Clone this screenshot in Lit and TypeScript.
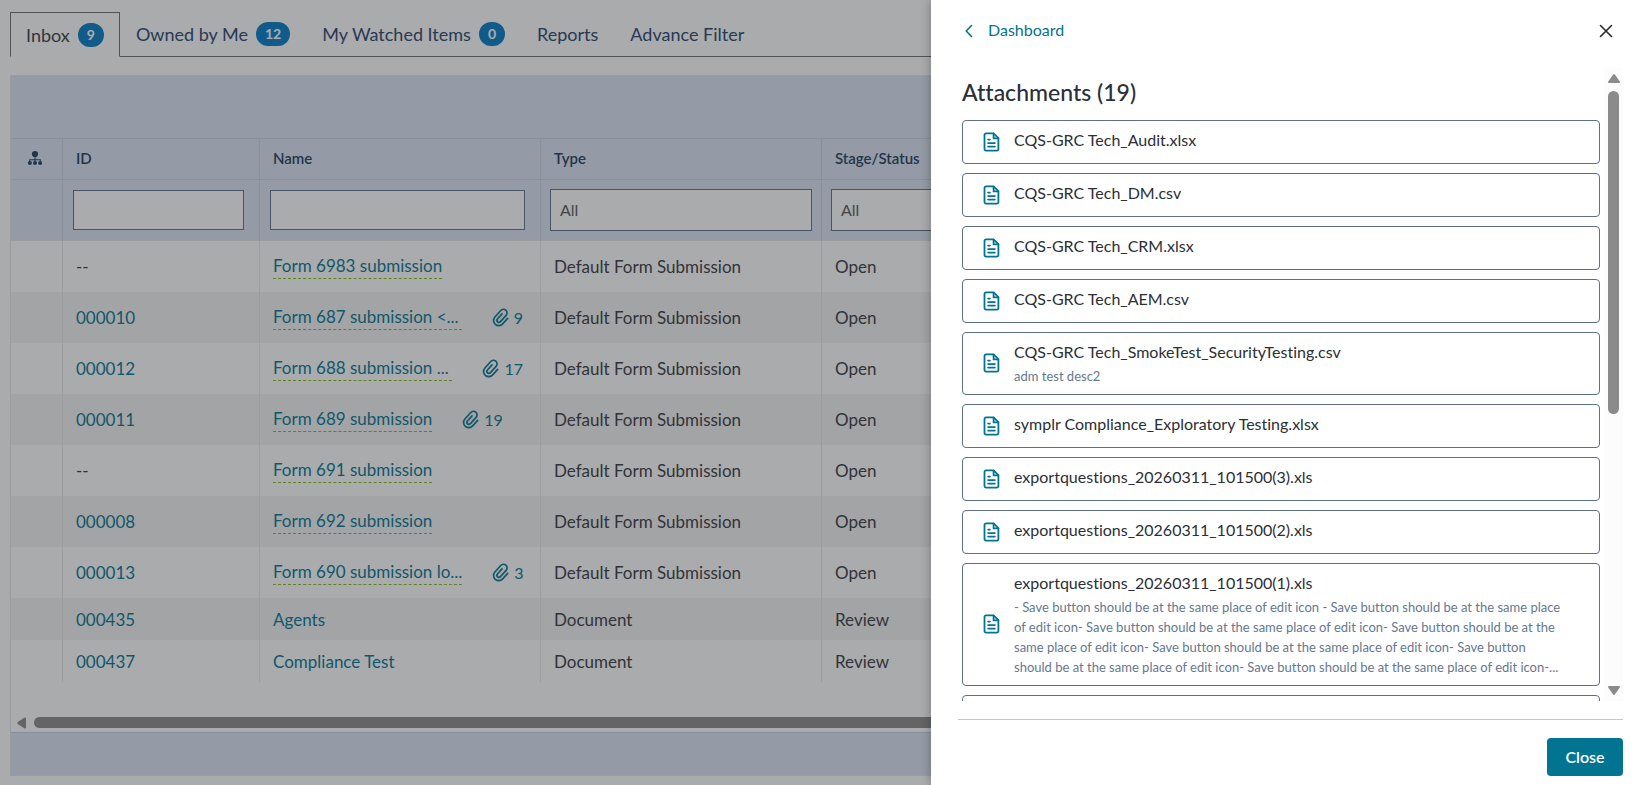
import { LitElement, html, css, svg, nothing } from "lit";
import { customElement } from "lit/decorators.js";

interface Tab {
  label: string;
  count?: number;
}

interface Item {
  id: string;
  name: string;
  type: string;
  stage: string;
  form?: boolean;
  cut?: boolean;
  files?: number;
}

interface Attachment {
  name: string;
  description?: string;
}

const TABS: Tab[] = [
  { label: "Inbox", count: 9 },
  { label: "Owned by Me", count: 12 },
  { label: "My Watched Items", count: 0 },
  { label: "Reports" },
  { label: "Advance Filter" },
];

const FORM = "Default Form Submission";

const ITEMS: Item[] = [
  { id: "", name: "Form 6983 submission", type: FORM, stage: "Open", form: true },
  { id: "000010", name: "Form 687 submission <...", type: FORM, stage: "Open", form: true, cut: true, files: 9 },
  { id: "000012", name: "Form 688 submission ...", type: FORM, stage: "Open", form: true, cut: true, files: 17 },
  { id: "000011", name: "Form 689 submission", type: FORM, stage: "Open", form: true, files: 19 },
  { id: "", name: "Form 691 submission", type: FORM, stage: "Open", form: true },
  { id: "000008", name: "Form 692 submission", type: FORM, stage: "Open", form: true },
  { id: "000013", name: "Form 690 submission lo...", type: FORM, stage: "Open", form: true, cut: true, files: 3 },
  { id: "000435", name: "Agents", type: "Document", stage: "Review" },
  { id: "000437", name: "Compliance Test", type: "Document", stage: "Review" },
];

const ATTACHMENTS: Attachment[] = [
  { name: "CQS-GRC Tech_Audit.xlsx" },
  { name: "CQS-GRC Tech_DM.csv" },
  { name: "CQS-GRC Tech_CRM.xlsx" },
  { name: "CQS-GRC Tech_AEM.csv" },
  { name: "CQS-GRC Tech_SmokeTest_SecurityTesting.csv", description: "adm test desc2" },
  { name: "symplr Compliance_Exploratory Testing.xlsx" },
  { name: "exportquestions_20260311_101500(3).xls" },
  { name: "exportquestions_20260311_101500(2).xls" },
  {
    name: "exportquestions_20260311_101500(1).xls",
    description:
      "- Save button should be at the same place of edit icon -" +
      " Save button should be at the same place of edit icon-".repeat(6) +
      "...",
  },
];

const clipIcon = svg`<svg class="clip" viewBox="0 0 18 18" width="18" height="18" aria-hidden="true">
  <g transform="rotate(42 9 9)">
    <path fill="none" stroke="currentColor" stroke-width="1.700" stroke-linecap="round"
      d="M14.200 4.800V12.300a5.200 5.200 0 0 1-10.400 0V3.600a3.600 3.600 0 0 1 7.200 0V12.100a2 2 0 0 1-4 0V5.200"/>
  </g>
</svg>`;

@customElement("inbox-grid")
class InboxGrid extends LitElement {
  static styles = css`
    :host {
      display: flex;
      flex-direction: column;
      flex: 1;
      border: 1px solid #e6e6e9;
      overflow: hidden;
    }
    .band {
      background: #dae4f3;
      height: 62px;
      flex: none;
    }
    .foot {
      height: 42px;
      border-top: 1px solid #c2d0e4;
    }
    .body {
      flex: 1;
    }
    table {
      border-collapse: separate;
      border-spacing: 0;
      table-layout: fixed;
      width: 100%;
      font-size: 17px;
    }
    .c-tree { width: 52px; }
    .c-id { width: 197px; }
    .c-name, .c-type, .c-stage { width: 281px; }
    th, td {
      box-sizing: border-box;
      text-align: left;
      padding: 0 13px;
      border-right: 1px solid #e8e8ea;
      white-space: nowrap;
    }
    thead th, thead td {
      background: #dae4f3;
      border-top: 1px solid #c9d4e6;
      border-right-color: #c9d4e6;
    }
    thead th {
      height: 41px;
      padding-bottom: 2px;
      font-size: 15px;
      font-weight: 600;
      color: #203a5c;
    }
    thead td {
      height: 62px;
      padding: 0 10px;
      border-bottom: 1px solid #e6e6e9;
    }
    thead .tree-head { padding: 0 16px 2px; }
    .tree { display: block; }
    input, select {
      display: block;
      box-sizing: border-box;
      margin: 0;
      border: 1px solid #5e7087;
      border-radius: 0;
      background: #fff;
      appearance: none;
      font: inherit;
      font-size: 16px;
      color: #555;
    }
    input { height: 40px; }
    .c-id-filter input { width: 171px; }
    .c-name-filter input { width: 255px; }
    select {
      width: 262px;
      height: 42px;
      padding: 0 9px 2px;
    }
    thead .pick { padding: 0 9px; }
    tbody td {
      height: 42px;
      color: #36373c;
    }
    .tall td { height: 51px; }
    tbody tr:nth-child(even) td { background: #f4f4f4; }
    a {
      color: #007490;
      text-decoration: none;
    }
    .cell {
      display: flex;
      align-items: center;
      gap: 30px;
    }
    .form {
      border-bottom: 1px dashed #83b81a;
      line-height: 24px;
    }
    .cut { flex: 1; }
    .files {
      display: flex;
      align-items: center;
      gap: 4px;
      font-size: 16px;
      padding-right: 4px;
    }
    .clip {
      display: block;
      overflow: visible;
    }
    .hscroll {
      display: flex;
      align-items: center;
      gap: 8px;
      height: 19px;
      padding-left: 6px;
      flex: none;
    }
    .hthumb {
      flex: 1;
      height: 11px;
      border-radius: 6px;
      background: #898989;
    }
  `;

  render() {
    return html`
      <div class="band"></div>
      <div class="body">
        <table>
          <colgroup>
            <col class="c-tree" /><col class="c-id" /><col class="c-name" />
            <col class="c-type" /><col class="c-stage" /><col />
          </colgroup>
          <thead>
            <tr>
              <th class="tree-head" aria-label="Hierarchy">
                <svg class="tree" viewBox="0 0 16 16" width="16" height="16" fill="currentColor" aria-hidden="true">
                  <circle cx="8" cy="4" r="3.100" />
                  <path d="M7.500 6h1v3.200h5.300v3h-1v-2H8.500v2h-1v-2H3.200v2h-1v-3h5.300z" />
                  <circle cx="2.900" cy="13" r="2" /><circle cx="8" cy="13" r="2" /><circle cx="13.100" cy="13" r="2" />
                </svg>
              </th>
              <th>ID</th><th>Name</th><th>Type</th><th>Stage/Status</th><th></th>
            </tr>
            <tr>
              <td></td>
              <td class="c-id-filter"><input type="text" aria-label="Filter by ID" /></td>
              <td class="c-name-filter"><input type="text" aria-label="Filter by name" /></td>
              <td class="pick"><select aria-label="Filter by type"><option>All</option></select></td>
              <td class="pick"><select aria-label="Filter by stage"><option>All</option></select></td>
              <td></td>
            </tr>
          </thead>
          <tbody>
            ${ITEMS.map(
              (item) => html`<tr class=${item.form ? "tall" : ""}>
                <td></td>
                <td>${item.id ? html`<a href="#">${item.id}</a>` : "--"}</td>
                <td>
                  <div class="cell">
                    <a href="#" class="${item.form ? "form" : ""} ${item.cut ? "cut" : ""}">${item.name}</a>
                    ${item.files ? html`<a href="#" class="files">${clipIcon}${item.files}</a>` : nothing}
                  </div>
                </td>
                <td>${item.type}</td>
                <td>${item.stage}</td>
                <td></td>
              </tr>`
            )}
          </tbody>
        </table>
      </div>
      <div class="hscroll">
        <svg viewBox="0 0 10 12" width="9" height="12" aria-hidden="true">
          <path d="M8.500 0Q10 0 10 1v10q0 1-1.500 1L.8 7Q0 6 .8 5z" fill="#898989" />
        </svg>
        <div class="hthumb"></div>
      </div>
      <div class="band foot"></div>
    `;
  }
}

@customElement("attachments-panel")
class AttachmentsPanel extends LitElement {
  static styles = css`
    :host {
      display: flex;
      flex-direction: column;
      box-sizing: border-box;
      background: #fff;
      color: #2b2f36;
      font-size: 16px;
      padding: 0 12px 9px 27px;
    }
    header {
      display: flex;
      align-items: center;
      justify-content: space-between;
      height: 62px;
      flex: none;
      padding: 0 10px 0 7px;
      margin-bottom: 6px;
    }
    .back {
      display: flex;
      align-items: center;
      gap: 15px;
      color: #007490;
      text-decoration: none;
    }
    .back span { padding-bottom: 3px; }
    .back svg, .x svg { display: block; }
    .x {
      border: 0;
      background: none;
      padding: 0;
      color: #25282f;
    }
    .scroll {
      display: flex;
      flex: 1;
      min-height: 0;
      gap: 4px;
    }
    .list {
      flex: 1;
      min-width: 0;
      overflow: hidden;
      padding-left: 4px;
    }
    h2 {
      margin: 0;
      padding: 8px 0 12px;
      font-size: 23px;
      line-height: 32px;
      font-weight: 500;
    }
    ul {
      list-style: none;
      margin: 0;
      padding: 0;
      display: flex;
      flex-direction: column;
      gap: 9px;
    }
    li {
      box-sizing: border-box;
      display: flex;
      gap: 14px;
      min-height: 44px;
      padding: 7px 36px 8px 20px;
      border: 1px solid #5e6f87;
      border-radius: 4px;
    }
    .file {
      flex: none;
      align-self: center;
      color: #007490;
    }
    .name { line-height: 24px; }
    .desc {
      margin-top: 2px;
      font-size: 13px;
      line-height: 20px;
      color: #66788f;
    }
    .track {
      display: flex;
      flex-direction: column;
      align-items: center;
      justify-content: space-between;
      width: 19px;
      background: #fcfcfc;
      padding: 6px 0;
      box-sizing: border-box;
    }
    .rail {
      flex: 1;
      padding: 8px 0;
    }
    .thumb {
      width: 11px;
      height: 55%;
      border-radius: 6px;
      background: #8b8b8b;
    }
    footer {
      display: flex;
      justify-content: flex-end;
      flex: none;
      margin-top: 18px;
      padding-top: 18px;
      border-top: 1px solid #c3c8d0;
    }
    .close {
      height: 38px;
      min-width: 76px;
      padding: 0 18px 2px;
      border: 0;
      border-radius: 4px;
      background: #007490;
      color: #fff;
      font: inherit;
      font-weight: 600;
    }
  `;

  render() {
    return html`
      <header>
        <a class="back" href="#">
          <svg viewBox="0 0 8 14" width="8" height="14" fill="none" stroke="currentColor" stroke-width="1.600" stroke-linecap="round" stroke-linejoin="round" aria-hidden="true">
            <path d="M6.500 1.500 1.200 7l5.300 5.500" />
          </svg>
          <span>Dashboard</span>
        </a>
        <button class="x" aria-label="Close panel">
          <svg viewBox="0 0 14 14" width="14" height="14" stroke="currentColor" stroke-width="1.600" stroke-linecap="round" aria-hidden="true">
            <path d="M1.500 1.500l11 11M12.500 1.500l-11 11" />
          </svg>
        </button>
      </header>
      <div class="scroll">
        <div class="list">
          <h2>Attachments (19)</h2>
          <ul>
            ${ATTACHMENTS.map(
              (file) => html`<li>
                <svg class="file" viewBox="0 0 17 20" width="17" height="20" fill="none" stroke="currentColor" stroke-width="1.800" stroke-linejoin="round" stroke-linecap="round" aria-hidden="true">
                  <path d="M3 1.400h7.600l4.800 4.800v10.900a1.500 1.500 0 0 1-1.500 1.500H3a1.500 1.500 0 0 1-1.500-1.500V2.900A1.500 1.500 0 0 1 3 1.400z" />
                  <path d="M10.600 1.700v4.700h4.700" />
                  <path d="M5 7.600h2M5 11.100h7M5 14.600h7" stroke-width="1.600" />
                </svg>
                <div>
                  <div class="name">${file.name}</div>
                  ${file.description ? html`<div class="desc">${file.description}</div>` : nothing}
                </div>
              </li>`
            )}
            <li></li>
          </ul>
        </div>
        <div class="track">
          <svg viewBox="0 0 12 9" width="12" height="9" fill="#8b8b8b" aria-hidden="true">
            <path d="M5 .8Q6-.6 7 .8l4.800 6.700Q12.300 9 11 9H1Q-.3 9 .2 7.500z" />
          </svg>
          <div class="rail"><div class="thumb"></div></div>
          <svg viewBox="0 0 12 9" width="12" height="9" fill="#8b8b8b" aria-hidden="true">
            <path d="M5 8.200Q6 9.600 7 8.200l4.800-6.700Q12.300 0 11 0H1Q-.3 0 .2 1.500z" />
          </svg>
        </div>
      </div>
      <footer><button class="close">Close</button></footer>
    `;
  }
}

@customElement("app-root")
class AppRoot extends LitElement {
  static styles = css`
    :host {
      display: block;
      position: relative;
      height: 100vh;
      overflow: hidden;
      font-family: Lato, "Liberation Sans", sans-serif;
      font-variant-ligatures: none;
      background: #fff;
    }
    main {
      display: flex;
      flex-direction: column;
      box-sizing: border-box;
      height: 100%;
      padding: 12px 10px 9px;
    }
    nav {
      display: flex;
      margin-bottom: 18px;
    }
    .tab {
      display: flex;
      align-items: center;
      gap: 8px;
      box-sizing: border-box;
      height: 45px;
      padding: 0 16px;
      border-bottom: 1px solid #6b6d72;
      font-size: 18px;
      color: #26436b;
      text-decoration: none;
    }
    .active {
      padding: 0 15px;
      border: 1px solid #6b6d72;
      border-bottom-color: transparent;
      color: #3a3b40;
    }
    .rest {
      flex: 1;
      border-bottom: 1px solid #6b6d72;
    }
    .badge {
      box-sizing: border-box;
      min-width: 26px;
      height: 24px;
      padding: 0 9px;
      border-radius: 12px;
      background: #007bc6;
      color: #fff;
      font-size: 14px;
      line-height: 24px;
      font-weight: 700;
      text-align: center;
    }
    .overlay {
      position: absolute;
      inset: 0;
      background: rgba(43, 45, 51, 0.4);
    }
    .panel {
      position: absolute;
      top: 0;
      bottom: 0;
      right: 0;
      width: 704px;
      max-width: 100%;
      box-shadow: 0 0 10px rgba(0, 0, 0, 0.3);
    }
  `;

  render() {
    return html`
      <main>
        <nav>
          ${TABS.map(
            (tab, i) => html`<a href="#" class="tab ${i === 0 ? "active" : ""}">
              ${tab.label}${tab.count === undefined ? nothing : html`<span class="badge">${tab.count}</span>`}
            </a>`
          )}
          <div class="rest"></div>
        </nav>
        <inbox-grid></inbox-grid>
      </main>
      <div class="overlay"></div>
      <attachments-panel class="panel"></attachments-panel>
    `;
  }
}
